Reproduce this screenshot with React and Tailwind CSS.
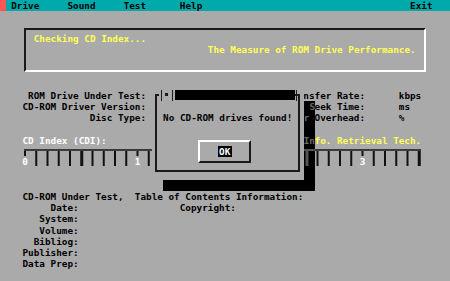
import React from "react";

const Y = "text-[#ffff55]";
const W = "text-white";
const G = "text-[#6a6a6a]";

function Line({ segs = [], className = "" }) {
  let cur = 0;
  const out = [];
  segs.forEach(([col, text, cls], i) => {
    const pad = Math.max(0, col - cur);
    if (pad > 0) out.push(<span key={"p" + i}>{" ".repeat(pad)}</span>);
    out.push(
      <span key={i} className={cls || ""}>
        {text}
      </span>
    );
    cur = col + text.length;
  });
  return (
    <div className={"h-[11.24px] leading-[11.24px] whitespace-pre " + className}>
      {out}
    </div>
  );
}

function Ruler() {
  const ticks = Array.from({ length: 36 }, (_, k) => k);
  return (
    <svg width="450" height="22.48" className="block">
      <rect x="24" y="3" width="397" height="2" fill="#3a3a3a" />
      {ticks.map((k) => {
        const x = 25 + k * 11.25;
        if (k % 10 === 0) {
          return (
            <g key={k}>
              <rect x={x - 1} y={5} width={2} height={5} fill="#111" />
              <text
                x={x}
                y={19}
                textAnchor="middle"
                fill="#ffffff"
                fontFamily="DejaVu Sans Mono, monospace"
                fontWeight="bold"
                fontSize="9.34"
              >
                {k / 10}
              </text>
            </g>
          );
        }
        const thick = k % 5 === 0 || k === 35;
        return (
          <rect
            key={k}
            x={x - 1}
            y={5}
            width={thick ? 3 : 2}
            height={15}
            fill="#111"
          />
        );
      })}
    </svg>
  );
}

function ShadowRuler() {
  return (
    <svg width="11.25" height="22.48" className="block">
      <rect x="0" y="3" width="11.25" height="2" fill="#555" />
      <rect x="1.5" y="5" width="3" height="15" fill="#555" />
    </svg>
  );
}

export default function App() {
  return (
    <div className="relative w-[450px] h-[281px] overflow-hidden bg-[#aaaaaa] text-black font-bold text-[9.34px] font-['DejaVu_Sans_Mono',monospace]">
      {/* menu bar */}
      <div className="h-[11px] overflow-hidden bg-[#00aaaa]">
        <Line
          className="-mt-[0.5px]"
          segs={[
            [0, " ", "bg-[#ff5555]"],
            [2, "Drive"],
            [12, "Sound"],
            [22, "Test"],
            [32, "Help"],
            [73, "Exit"],
          ]}
        />
      </div>

      {/* info panel */}
      <div className="mt-[17px] ml-[24px] w-[402px] h-[44px] border-2 border-t-[#1a1a1a] border-l-[#1a1a1a] border-r-white border-b-white pt-[3px] pl-[7.75px]">
        <Line segs={[[0, "Checking CD Index...", Y]]} />
        <Line segs={[[31, "The Measure of ROM Drive Performance.", Y]]} />
      </div>

      {/* main rows */}
      <div className="mt-[17.92px]">
        <Line
          segs={[
            [5, "ROM Drive Under Test:"],
            [54, "nsfer Rate:"],
            [71, "kbps"],
          ]}
        />
        <Line
          segs={[
            [4, "CD-ROM Driver Version:"],
            [56, "eek Time:"],
            [71, "ms"],
          ]}
        />
        <Line
          segs={[
            [16, "Disc Type:"],
            [56, "Overhead:"],
            [71, "%"],
          ]}
        />
        <Line />
        <Line
          segs={[
            [4, "CD Index (CDI):", W],
            [56, "fo. Retrieval Tech.", Y],
          ]}
        />
        <Ruler />
        <Line />
        <Line />
        <Line segs={[[4, "CD-ROM Under Test,  Table of Contents Information:"]]} />
        <Line segs={[[9, "Date:"], [32, "Copyright:"]]} />
        <Line segs={[[7, "System:"]]} />
        <Line segs={[[7, "Volume:"]]} />
        <Line segs={[[6, "Bibliog:"]]} />
        <Line segs={[[4, "Publisher:"]]} />
        <Line segs={[[4, "Data Prep:"]]} />
      </div>

      {/* dialog shadow */}
      <div className="absolute left-[303.75px] top-[101.16px] w-[11.25px] h-[89.92px] bg-black">
        <Line className={G} segs={[[1, "S"]]} />
        <Line className={G} segs={[[0, "r"]]} />
        <Line />
        <Line className={G} segs={[[0, "In"]]} />
        <ShadowRuler />
      </div>
      <div className="absolute left-[163.125px] top-[179.84px] w-[140.625px] h-[11.24px] bg-black" />

      {/* dialog */}
      <div className="absolute left-[151.875px] top-[89.92px] w-[151.875px] h-[89.92px] bg-[#aaaaaa]">
        <div className="absolute left-[3px] top-[3.6px] w-[145.5px] h-[78px] border-2 border-[#1a1a1a]" />
        <div className="relative flex h-[11.24px] items-start pl-[7px]">
          <div className="flex h-[11.24px] w-[16px] items-start bg-[#aaaaaa]">
            <div className="ml-[2px] h-[11.24px] w-[1.5px] bg-[#1a1a1a]" />
            <div className="ml-[2.5px] mt-[3.5px] h-[3px] w-[3px] bg-[#1a1a1a]" />
            <div className="ml-[4px] h-[11.24px] w-[1.5px] bg-[#1a1a1a]" />
          </div>
          <div className="h-[10px] w-[120px] bg-black" />
          <div className="ml-[1px] h-[11.24px] w-[1.5px] bg-[#1a1a1a]" />
        </div>
        <Line />
        <Line segs={[[2, "No CD-ROM drives found!"]]} />
        <Line />
        <div className="relative ml-[46.6px] mt-[5px] flex h-[23.5px] w-[52.5px] items-center justify-center border-2 border-t-white border-l-white border-r-[#1a1a1a] border-b-[#1a1a1a]">
          <span className="bg-black px-[1.5px] leading-[11px] text-white">OK</span>
        </div>
      </div>
    </div>
  );
}
